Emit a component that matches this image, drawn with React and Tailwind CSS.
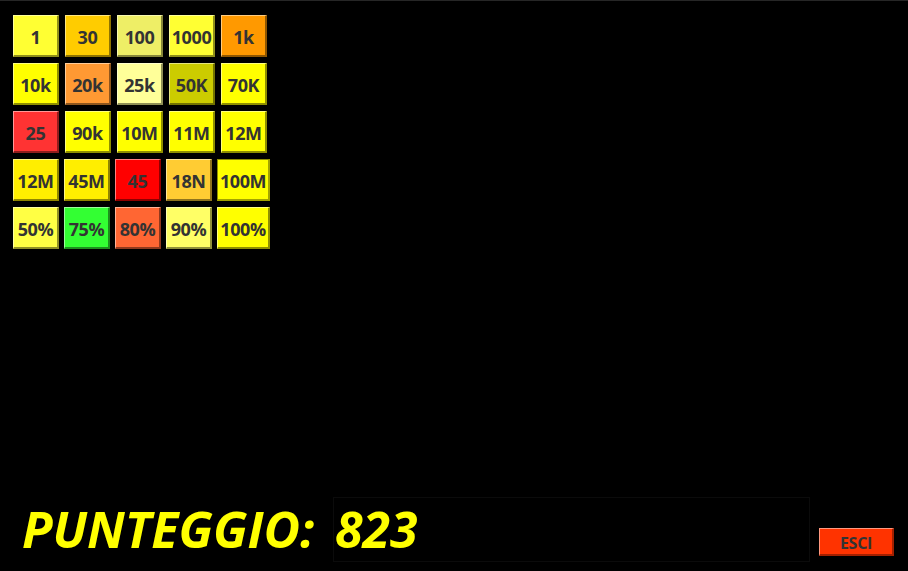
import React from "react";

const rows = [
  [
    { t: "1", c: "bg-[#ffff33]", b: "border-t-[#ffff99] border-l-[#ffff99] border-r-[#8f8f1a] border-b-[#8f8f1a]" },
    { t: "30", c: "bg-[#ffcc00]", b: "border-t-[#ffe680] border-l-[#ffe680] border-r-[#8f7300] border-b-[#8f7300]" },
    { t: "100", c: "bg-[#eeee66]", b: "border-t-[#f8f8b0] border-l-[#f8f8b0] border-r-[#86863a] border-b-[#86863a]" },
    { t: "1000", c: "bg-[#ffff33]", b: "border-t-[#ffff99] border-l-[#ffff99] border-r-[#8f8f1a] border-b-[#8f8f1a]" },
    { t: "1k", c: "bg-[#ff9900]", b: "border-t-[#ffcc80] border-l-[#ffcc80] border-r-[#8f5600] border-b-[#8f5600]" },
  ],
  [
    { t: "10k", c: "bg-[#ffff00]", b: "border-t-[#ffff80] border-l-[#ffff80] border-r-[#8f8f00] border-b-[#8f8f00]" },
    { t: "20k", c: "bg-[#ff9933]", b: "border-t-[#ffcc99] border-l-[#ffcc99] border-r-[#8f561d] border-b-[#8f561d]" },
    { t: "25k", c: "bg-[#ffff99]", b: "border-t-[#ffffcc] border-l-[#ffffcc] border-r-[#8f8f56] border-b-[#8f8f56]" },
    { t: "50K", c: "bg-[#cccc00]", b: "border-t-[#e6e680] border-l-[#e6e680] border-r-[#737300] border-b-[#737300]" },
    { t: "70K", c: "bg-[#ffff00]", b: "border-t-[#ffff80] border-l-[#ffff80] border-r-[#8f8f00] border-b-[#8f8f00]" },
  ],
  [
    { t: "25", c: "bg-[#ff3333]", b: "border-t-[#ff9999] border-l-[#ff9999] border-r-[#8f1d1d] border-b-[#8f1d1d]" },
    { t: "90k", c: "bg-[#ffff00]", b: "border-t-[#ffff80] border-l-[#ffff80] border-r-[#8f8f00] border-b-[#8f8f00]" },
    { t: "10M", c: "bg-[#ffff00]", b: "border-t-[#ffff80] border-l-[#ffff80] border-r-[#8f8f00] border-b-[#8f8f00]" },
    { t: "11M", c: "bg-[#ffff00]", b: "border-t-[#ffff80] border-l-[#ffff80] border-r-[#8f8f00] border-b-[#8f8f00]" },
    { t: "12M", c: "bg-[#ffff00]", b: "border-t-[#ffff80] border-l-[#ffff80] border-r-[#8f8f00] border-b-[#8f8f00]" },
  ],
  [
    { t: "12M", c: "bg-[#ffee00]", b: "border-t-[#fff780] border-l-[#fff780] border-r-[#8f8500] border-b-[#8f8500]" },
    { t: "45M", c: "bg-[#ffee00]", b: "border-t-[#fff780] border-l-[#fff780] border-r-[#8f8500] border-b-[#8f8500]" },
    { t: "45", c: "bg-[#ff0000]", b: "border-t-[#ff8080] border-l-[#ff8080] border-r-[#8f0000] border-b-[#8f0000]" },
    { t: "18N", c: "bg-[#ffcc33]", b: "border-t-[#ffe699] border-l-[#ffe699] border-r-[#8f731d] border-b-[#8f731d]" },
    { t: "100M", c: "bg-[#ffff00]", b: "border-t-[#8f8f00] border-l-[#8f8f00] border-r-[#a3a300] border-b-[#a3a300]", w: true },
  ],
  [
    { t: "50%", c: "bg-[#ffff44]", b: "border-t-[#ffffa0] border-l-[#ffffa0] border-r-[#8f8f26] border-b-[#8f8f26]" },
    { t: "75%", c: "bg-[#33ff33]", b: "border-t-[#99ff99] border-l-[#99ff99] border-r-[#1d8f1d] border-b-[#1d8f1d]" },
    { t: "80%", c: "bg-[#ff6633]", b: "border-t-[#ffb399] border-l-[#ffb399] border-r-[#8f391d] border-b-[#8f391d]" },
    { t: "90%", c: "bg-[#ffff66]", b: "border-t-[#ffffb3] border-l-[#ffffb3] border-r-[#8f8f39] border-b-[#8f8f39]" },
    { t: "100%", c: "bg-[#ffff00]", b: "border-t-[#ffff80] border-l-[#ffff80] border-r-[#8f8f00] border-b-[#8f8f00]", w: true },
  ],
];

export default function App() {
  return (
    <div
      className="w-[908px] h-[571px] bg-black flex flex-col overflow-hidden border-t border-t-[#262626]"
      style={{ fontFamily: '"Open Sans", "Noto Sans", sans-serif' }}
    >
      <div className="pt-[14px] pl-[13px] flex flex-col gap-[6px]">
        {rows.map((row, i) => (
          <div key={i} className={`flex ${i >= 3 ? "gap-[5px]" : "gap-[6px]"}`}>
            {row.map((tile, j) => (
              <div
                key={j}
                className={`${tile.w ? "w-[53px]" : "w-[46px]"} h-[42px] ${tile.c} ${tile.b} border-t border-l border-r-2 border-b-2 flex items-center justify-center pt-[2px] text-[18px] font-bold text-[#333333] leading-none tracking-[-0.4px] whitespace-nowrap`}
              >
                {tile.t}
              </div>
            ))}
          </div>
        ))}
      </div>
      <div className="mt-auto h-[75px] flex items-start">
        <div className="w-[333px] shrink-0 pl-[22px] mt-[9px] h-[49px] leading-[49px] text-[50px] font-bold italic text-[#ffff00] whitespace-nowrap">
          PUNTEGGIO:
        </div>
        <div className="w-[477px] h-[65px] mt-[1px] border border-[#0b0b0b] pl-[1px] pt-[7px] text-[50px] leading-[49px] font-bold italic text-[#ffff00]">
          823
        </div>
        <button className="ml-[9px] mt-[32px] w-[75px] h-[28px] bg-[#ff3300] border-t border-l border-t-[#ff9980] border-l-[#ff9980] border-r-2 border-b-2 border-r-[#a32000] border-b-[#a32000] text-[16px] font-bold text-[#333333] flex items-center justify-center leading-none tracking-[-0.3px] pt-[2px]">
          ESCI
        </button>
      </div>
    </div>
  );
}
